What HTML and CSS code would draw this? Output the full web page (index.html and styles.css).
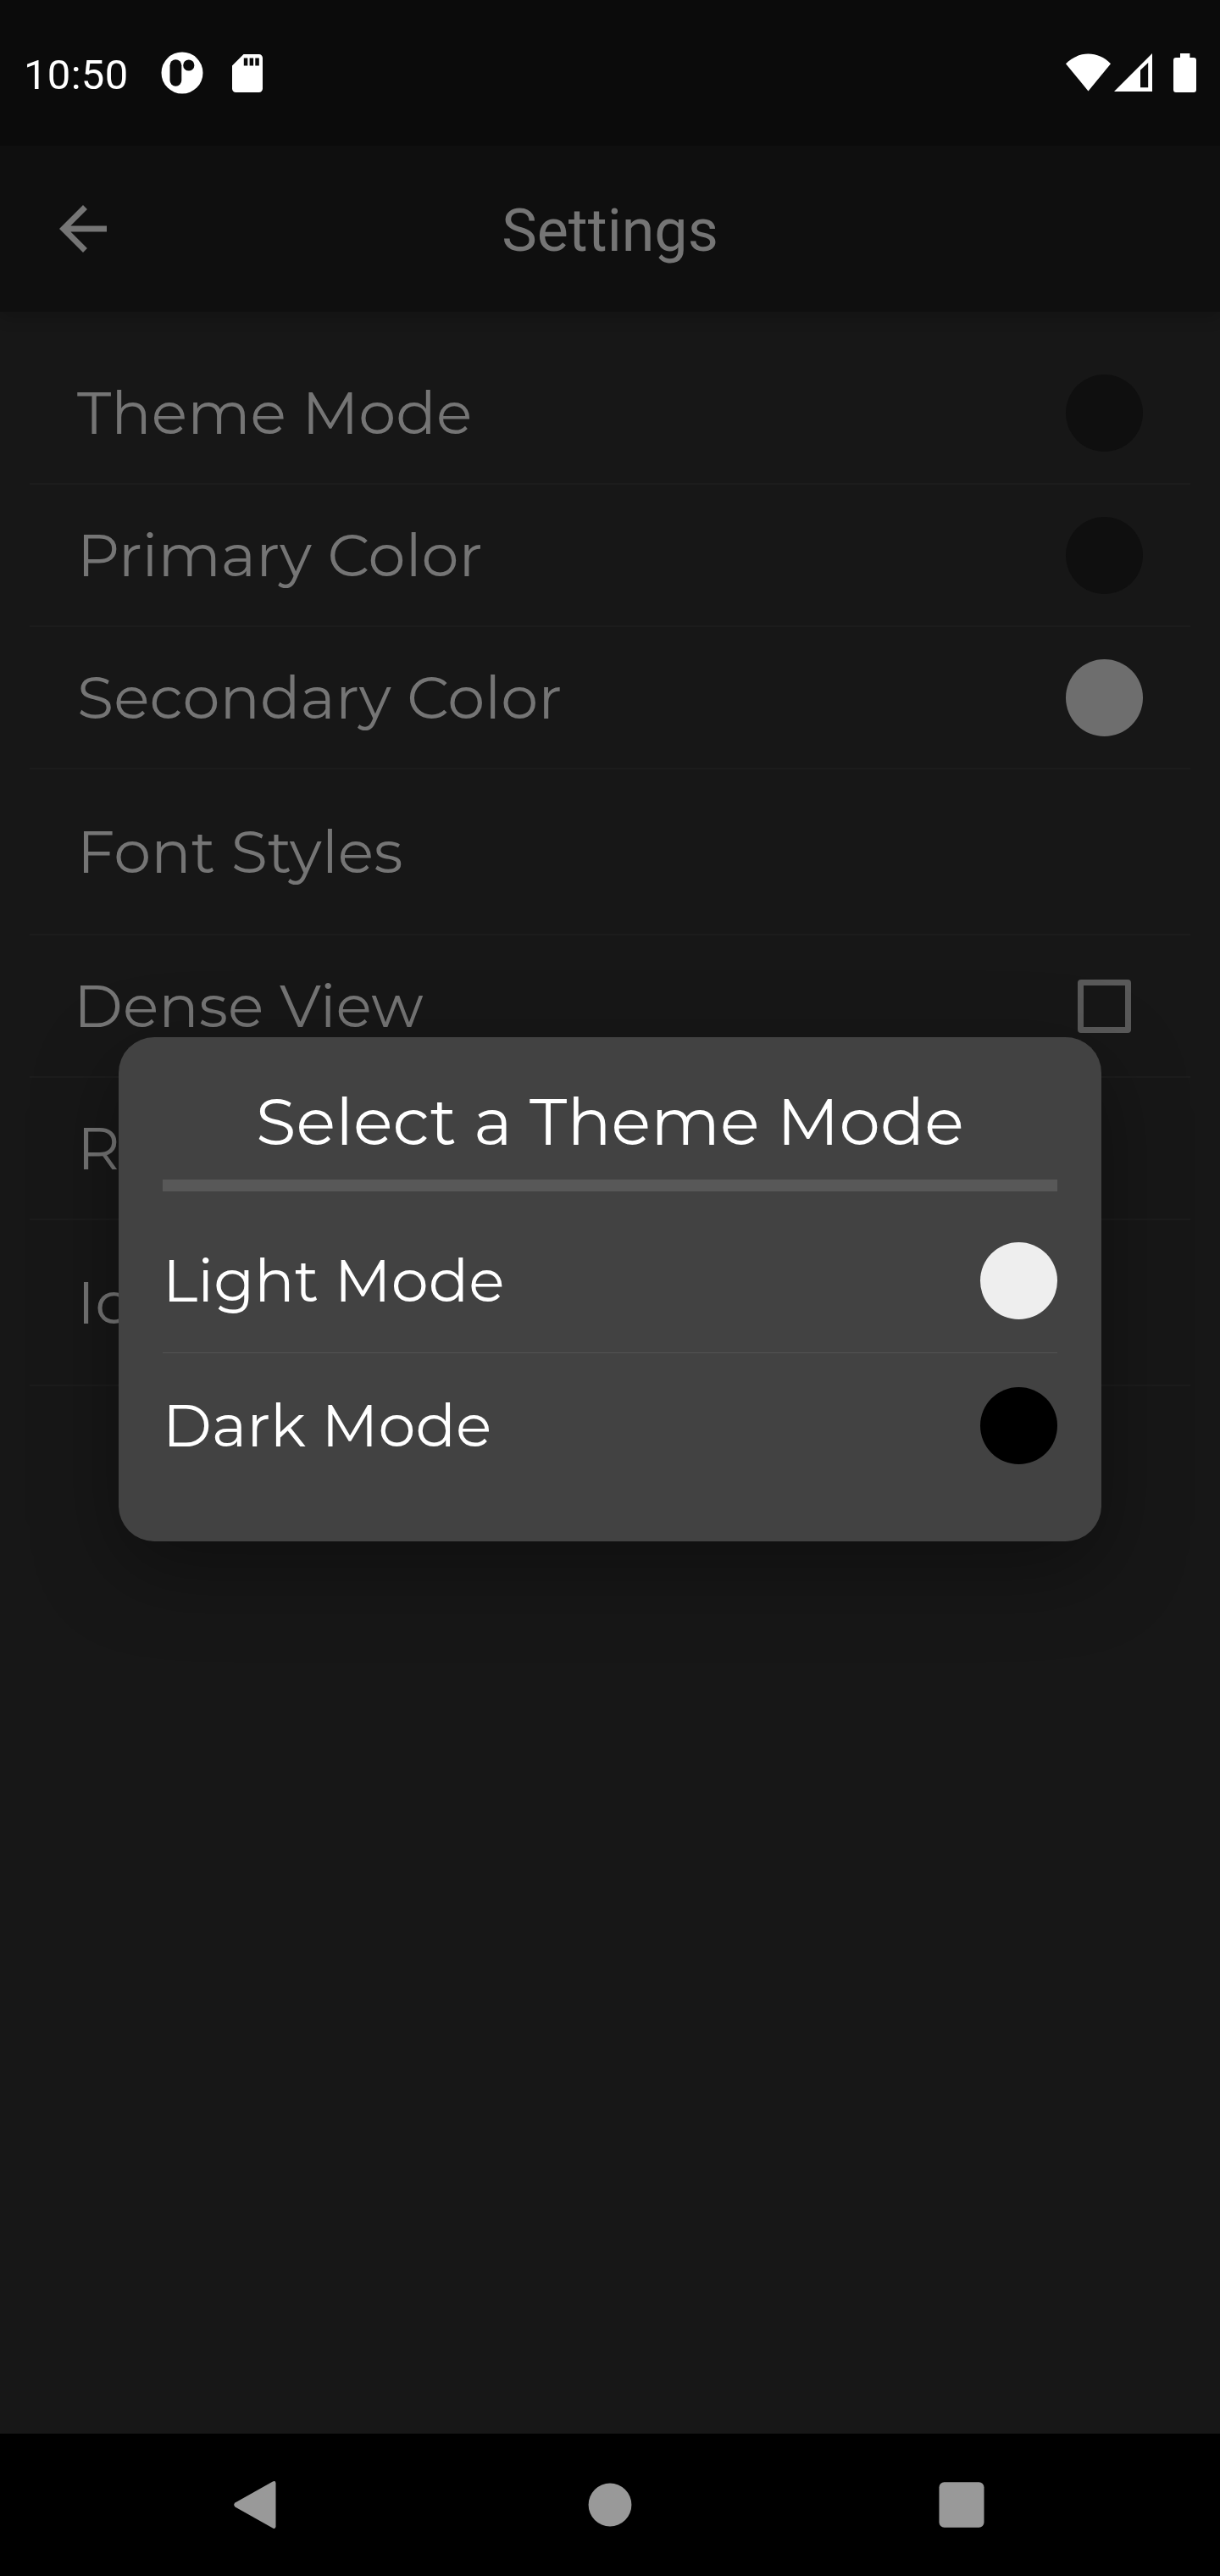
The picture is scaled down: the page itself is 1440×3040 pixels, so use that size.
FILE: index.html
```
<!DOCTYPE html>
<html lang="en">
<head>
<meta charset="utf-8">
<title>Settings</title>
<link rel="stylesheet" href="styles.css">
</head>
<body>
<div class="screen">
  <header class="status-bar">
    <span class="clock">10:50</span>
    <svg class="icon-app" width="50" height="50" viewBox="0 0 50 50" aria-hidden="true">
      <circle cx="25" cy="25" r="24.5" fill="#fff"/>
      <rect x="10.5" y="9.3" width="13.8" height="31.4" rx="6.9" fill="#0b0b0b"/>
      <circle cx="32.8" cy="16" r="6.6" fill="#0b0b0b"/>
    </svg>
    <svg class="icon-sd" width="36" height="45" viewBox="0 0 36 45" aria-hidden="true">
      <path fill="#fff" d="M13.5 0H31.5A4.4 4.4 0 0 1 36 4.4V40.5A4.4 4.4 0 0 1 31.6 45H4.4A4.4 4.4 0 0 1 0 40.5V13.5Z"/>
      <path fill="#0b0b0b" d="M13.8 4.4h4.5v9.2h-4.5zM20.6 4.4h4.5v9.2h-4.5zM27.3 4.4h4.5v9.2h-4.5z"/>
    </svg>
    <div class="system-icons">
      <svg class="icon-wifi" width="53" height="45" viewBox="0 0 53 45" aria-hidden="true">
        <path fill="#fff" d="M0 12.2C7.6 4.6 16.6.6 26.5.6S45.400 4.600 53 12.200L26.500 44.600Z"/>
      </svg>
      <svg class="icon-signal" width="45" height="45" viewBox="0 0 45 45" aria-hidden="true">
        <path fill="#fff" fill-rule="evenodd" d="M45 0V45H0ZM31 19.800V40.300H40.200V11Z"/>
      </svg>
      <svg class="icon-battery" width="27" height="46" viewBox="0 0 27 46" aria-hidden="true">
        <path fill="#fff" d="M8 0H19.400V5H24A3 3 0 0 1 27 8V43A3 3 0 0 1 24 46H3A3 3 0 0 1 0 43V8A3 3 0 0 1 3 5H8Z"/>
      </svg>
    </div>
  </header>

  <div class="app-bar">
    <svg class="back" width="84" height="84" viewBox="0 0 24 24" aria-hidden="true">
      <path fill="#757575" d="M20 11H7.830l5.590-5.590L12 4l-8 8 8 8 1.410-1.410L7.830 13H20v-2z"/>
    </svg>
    <h1 class="app-title">Settings</h1>
  </div>

  <main class="settings">
    <div class="row"><span>Theme Mode</span><i class="swatch swatch-dark"></i></div>
    <div class="row"><span>Primary Color</span><i class="swatch swatch-dark"></i></div>
    <div class="row"><span>Secondary Color</span><i class="swatch swatch-grey"></i></div>
    <div class="row row-tall"><span>Font Styles</span></div>
    <div class="row row-check"><span>Dense View</span><i class="checkbox"></i></div>
    <div class="row"><span>R</span></div>
    <div class="row row-tall"><span>Ic</span></div>
  </main>

  <nav class="nav-bar">
    <svg width="60" height="60" viewBox="0 0 60 60" aria-hidden="true">
      <path fill="#999" d="M7.500 27.600L52 2.600Q55.300 1 55.500 4.500V55.500Q55.300 59 52 57.400L7.500 32.400Q4.800 30 7.500 27.600Z"/>
    </svg>
    <svg class="nav-home" width="52" height="52" viewBox="0 0 52 52" aria-hidden="true"><circle cx="26" cy="26" r="25.400" fill="#999"/></svg>
    <svg width="60" height="60" viewBox="0 0 60 60" aria-hidden="true"><rect x="3.500" y="3.300" width="53" height="53.400" rx="6" fill="#999"/></svg>
  </nav>

  <section class="dialog" role="dialog">
    <h2 class="dialog-title">Select a Theme Mode</h2>
    <div class="rule"></div>
    <div class="option"><span>Light Mode</span><i class="swatch swatch-light"></i></div>
    <div class="option-line"></div>
    <div class="option"><span>Dark Mode</span><i class="swatch swatch-black"></i></div>
  </section>
</div>
</body>
</html>
```
FILE: styles.css
```
* { box-sizing: border-box; }

body {
  margin: 0;
  background: #171717;
}

.screen {
  position: relative;
  display: flex;
  flex-direction: column;
  width: 1440px;
  height: 3040px;
  overflow: hidden;
  background: #171717;
  font-family: Montserrat, Inter, sans-serif;
  font-size: 70px;
  font-weight: 400;
  letter-spacing: 0.12px;
}

svg { display: block; flex: none; }

/* Status bar */
.status-bar {
  display: flex;
  align-items: flex-start;
  height: 172px;
  padding: 59px 28px 0;
  background: #0b0b0b;
}

.clock {
  width: 162px;
  font: 400 49px/60px Roboto, sans-serif;
  letter-spacing: 0.3px;
  color: #fff;
}

.icon-app { margin-top: 2px; }
.icon-sd { margin: 5px 0 0 34px; }

.system-icons {
  display: flex;
  margin: 4px 0 0 auto;
}

.icon-signal { margin-left: 4px; }
.icon-battery { margin-left: 25px; }

/* App bar */
.app-bar {
  display: grid;
  grid-template-columns: 84px 1fr 84px;
  align-items: center;
  height: 196px;
  padding: 0 56px;
  background: #0f0f0f;
  box-shadow: 0 8px 16px rgba(0, 0, 0, 0.16);
  clip-path: inset(0 0 -40px 0);
}

.app-title {
  margin: 0;
  padding-top: 3px;
  font: 400 70px/84px Roboto, sans-serif;
  letter-spacing: 0;
  text-align: center;
  color: #757575;
}

/* Settings list */
.settings {
  flex: 1;
  padding: 36px 35px 0;
}

.row {
  display: flex;
  align-items: center;
  justify-content: space-between;
  height: 168px;
  padding: 0 56px;
  border-bottom: 2px solid #1c1c1c;
  line-height: 86px;
  color: #757575;
}

.row-tall { height: 196px; }
.row-check { padding: 0 70px 0 52px; }

.swatch {
  width: 91px;
  height: 91px;
  border-radius: 50%;
}

.swatch-dark { background: #0f0f0f; }
.swatch-grey { background: #6e6e6e; }
.swatch-light { background: #eee; }
.swatch-black { background: #000; }

.checkbox {
  width: 63px;
  height: 63px;
  border: 7px solid #595959;
  border-radius: 4px;
}

/* Navigation bar */
.nav-bar {
  display: flex;
  align-items: center;
  justify-content: space-between;
  height: 168px;
  padding: 0 275px 0 270px;
  background: #000;
}

.nav-home { margin-left: 5px; }

/* Theme dialog */
.dialog {
  position: absolute;
  left: 140px;
  top: 1224px;
  width: 1160px;
  height: 595px;
  padding: 52px 52px 0;
  border-radius: 42px;
  background: #424242;
  box-shadow: 0 32px 100px rgba(0, 0, 0, 0.35);
  color: #fff;
}

.dialog-title {
  margin: 0;
  font-size: 77px;
  font-weight: 400;
  line-height: 94px;
  text-align: center;
}

.rule {
  height: 14px;
  margin-top: 22px;
  background: #585858;
}

.option {
  display: flex;
  align-items: center;
  justify-content: space-between;
  height: 91px;
  margin-top: 60px;
  line-height: 85px;
}

.option span { padding-bottom: 1px; }

.option-line {
  height: 1px;
  margin: 39px 0 -20px;
  background: #535353;
}
```
